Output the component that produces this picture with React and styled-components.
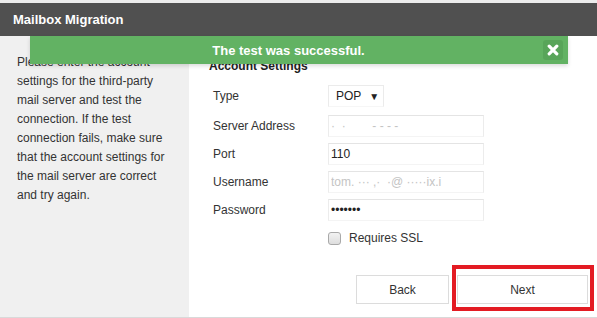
import React from "react";
import styled, { createGlobalStyle } from "styled-components";

const GlobalStyle = createGlobalStyle`
  html, body {
    margin: 0;
    padding: 0;
    background: #ffffff;
  }
  body {
    font-family: "Liberation Sans", Arial, sans-serif;
    color: #333333;
  }
`;

const Page = styled.div`
  position: relative;
  width: 597px;
  height: 318px;
  display: flex;
  flex-direction: column;
  border-top: 3px solid #ececec;
  box-sizing: border-box;
  overflow: hidden;
`;

const Header = styled.div`
  height: 33px;
  flex: none;
  background: #505050;
  color: #ffffff;
  display: flex;
  align-items: center;
  padding-left: 13px;
  font-size: 13px;
  font-weight: bold;
`;

const Body = styled.div`
  height: 281px;
  flex: none;
  display: flex;
  border-bottom: 1px solid #d9d9d9;
`;

const Sidebar = styled.div`
  width: 189px;
  flex: none;
  box-sizing: border-box;
  background: #f0f0f0;
  padding: 17px 15px 0 17px;
  font-size: 12px;
  line-height: 19px;
  color: #333333;
`;

const Content = styled.div`
  flex: 1;
  display: flex;
  flex-direction: column;
  padding-top: 22px;
`;

const SectionTitle = styled.div`
  margin-left: 20px;
  font-size: 12px;
  font-weight: bold;
  line-height: 16px;
  color: #222222;
`;

const Form = styled.div`
  margin: 11px 0 0 24px;
  display: grid;
  grid-template-columns: 115px 156px;
  grid-template-rows: 24px repeat(4, 22px);
  row-gap: 6px;
  align-items: center;
`;

const Label = styled.div`
  font-size: 12px;
  color: #333333;
  align-self: ${(p) => (p.$top ? "start" : "center")};
  line-height: ${(p) => (p.$top ? "22px" : "normal")};
`;

const SelectBox = styled.div`
  align-self: start;
  width: 56px;
  height: 22px;
  box-sizing: border-box;
  border: 1px solid #ebebeb;
  border-bottom-color: #f6f6f6;
  display: flex;
  align-items: center;
  padding-left: 7px;
  gap: 8px;
  font-size: 12px;
  color: #222222;
`;

const Caret = styled.span`
  font-size: 10px;
  color: #222222;
`;

const TextInput = styled.input`
  width: 156px;
  height: 22px;
  box-sizing: border-box;
  margin: 0;
  border: 1px solid #ececec;
  border-top-color: #e4e4e4;
  border-bottom-color: #f4f4f4;
  padding: 0 2px;
  font-family: "Liberation Sans", Arial, sans-serif;
  font-size: 12px;
  color: ${(p) => (p.$faded ? "#c4c4c4" : "#222222")};
  background: #ffffff;
  outline: none;
`;

const CheckRow = styled.label`
  margin: 10px 0 0 139px;
  display: flex;
  align-items: center;
  gap: 8px;
  font-size: 12px;
  color: #333333;
`;

const CheckBox = styled.span`
  width: 11px;
  height: 11px;
  border: 1px solid #a9a9a9;
  border-radius: 3px;
  background: linear-gradient(#f2f2f2, #dedede);
`;

const ButtonRow = styled.div`
  margin-top: 30px;
  display: flex;
  justify-content: flex-end;
  gap: 8px;
  padding-right: 9px;
`;

const Button = styled.button`
  position: relative;
  width: ${(p) => p.$width}px;
  height: 29px;
  box-sizing: border-box;
  border: 1px solid #dcdcdc;
  background: #ffffff;
  font-family: "Liberation Sans", Arial, sans-serif;
  font-size: 12px;
  color: #333333;
  padding: 0;

  ${(p) =>
    p.$highlighted &&
    `
    &::after {
      content: "";
      position: absolute;
      top: -11px;
      left: -6px;
      right: -7px;
      bottom: -8px;
      border: 4px solid #e31b23;
    }
  `}
`;

const Toast = styled.div`
  position: absolute;
  top: 33px;
  left: 30px;
  width: 538px;
  height: 28px;
  background: #62b263;
  box-shadow: 0 2px 4px rgba(0, 0, 0, 0.14);
  display: flex;
  align-items: center;
  padding-right: 5px;
  box-sizing: border-box;
`;

const ToastText = styled.div`
  flex: 1;
  text-align: center;
  padding-left: 4px;
  color: #ffffff;
  font-size: 13px;
  font-weight: bold;
`;

const CloseButton = styled.div`
  width: 20px;
  height: 20px;
  border-radius: 3px;
  background: #58a559;
  display: flex;
  align-items: center;
  justify-content: center;
`;

const CloseIcon = () => (
  <svg width="12" height="12" viewBox="0 0 12 12">
    <path
      d="M2.2 2.2 L9.8 9.8 M9.8 2.2 L2.2 9.8"
      stroke="#ffffff"
      strokeWidth="3.2"
      strokeLinecap="round"
    />
  </svg>
);

export default function App() {
  return (
    <>
      <GlobalStyle />
      <Page>
        <Header>Mailbox Migration</Header>
        <Body>
          <Sidebar>
            Please enter the account settings for the third-party mail server
            and test the connection. If the test connection fails, make sure
            that the account settings for the mail server are correct and try
            again.
          </Sidebar>
          <Content>
            <SectionTitle>Account Settings</SectionTitle>
            <Form>
              <Label $top>Type</Label>
              <SelectBox>
                POP <Caret>▼</Caret>
              </SelectBox>
              <Label>Server Address</Label>
              <TextInput $faded readOnly defaultValue="·  ·        - - - -" />
              <Label>Port</Label>
              <TextInput readOnly defaultValue="110" />
              <Label>Username</Label>
              <TextInput $faded readOnly defaultValue="tom. ··· ,·  ·@ ·····ix.i" />
              <Label>Password</Label>
              <TextInput type="password" readOnly defaultValue="1234567" />
            </Form>
            <CheckRow>
              <CheckBox />
              Requires SSL
            </CheckRow>
            <ButtonRow>
              <Button $width={93}>Back</Button>
              <Button $width={131} $highlighted>
                Next
              </Button>
            </ButtonRow>
          </Content>
        </Body>
        <Toast>
          <ToastText>The test was successful.</ToastText>
          <CloseButton>
            <CloseIcon />
          </CloseButton>
        </Toast>
      </Page>
    </>
  );
}
